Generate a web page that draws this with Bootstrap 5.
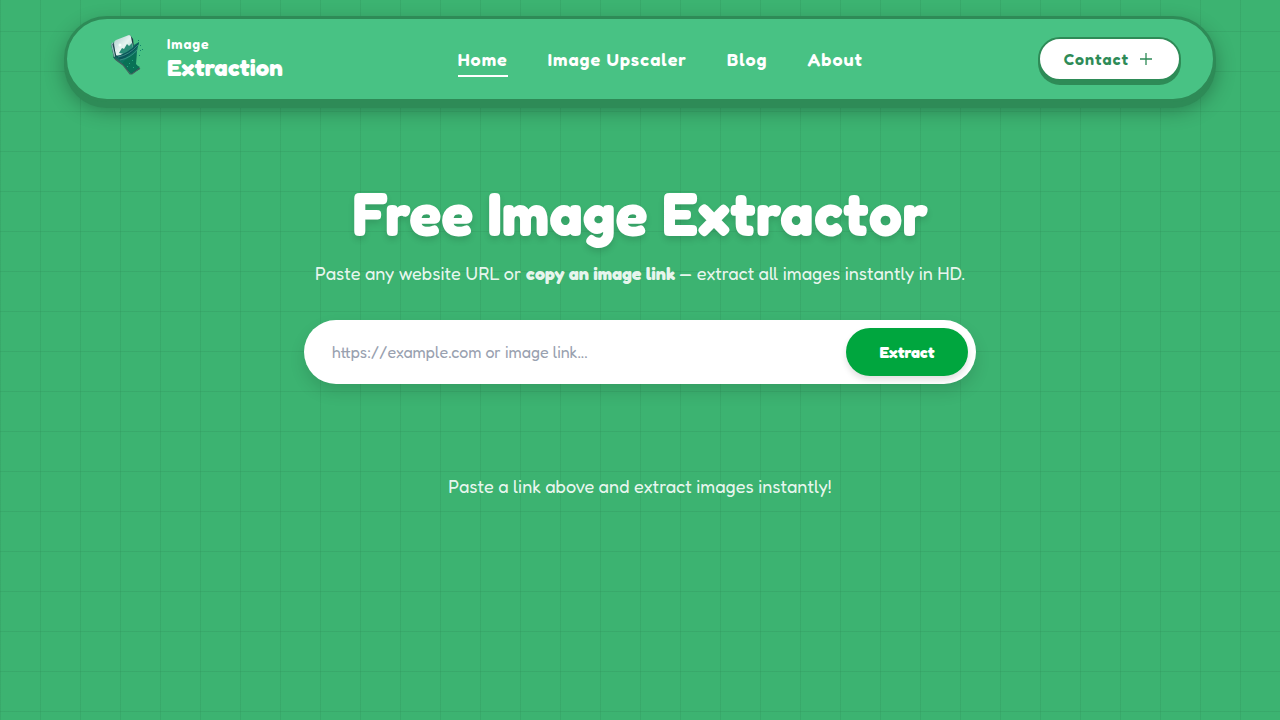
<!DOCTYPE html>
<html lang="en">
<head>
<meta charset="utf-8">
<meta name="viewport" content="width=device-width, initial-scale=1">
<title>Free Image Extractor</title>
<link rel="stylesheet" href="https://cdn.jsdelivr.net/npm/bootstrap@5.3.0/dist/css/bootstrap.min.css">
<style>
  :root { --edge: #2e8b57; --panel: #48c284; --page: #3cb371; }
  body {
    font-family: Fredoka, Lato, sans-serif;
    min-height: 100vh;
    background-color: var(--page);
    background-image:
      linear-gradient(rgba(46, 139, 87, .25) 1px, transparent 1px),
      linear-gradient(90deg, rgba(46, 139, 87, .25) 1px, transparent 1px);
    background-size: 40px 40px;
    background-position: 0 31px, 0 0;
  }
  .site-bar {
    width: 90%;
    min-height: 86px;
    padding: 0 32px 0 40px;
    background: var(--panel);
    border: 3px solid var(--edge);
    border-radius: 44px;
    box-shadow: 0 6px 0 var(--edge), 0 8px 20px rgba(0, 0, 0, .3);
  }
  .brand-link { padding-bottom: 2px; }
  .brand-link svg { margin-bottom: 6px; }
  .brand-top { font-size: 14px; line-height: 20px; font-weight: 600; letter-spacing: 1px; }
  .brand-main { font-size: 24px; line-height: 28px; font-weight: 700; }
  .site-links { gap: 40px; padding-top: 4px; }
  .site-links a { font-size: 18px; line-height: 28px; font-weight: 600; letter-spacing: 1px; padding-bottom: 2px; border-bottom: 2px solid transparent; }
  .site-links a.active { border-color: #fff; }
  .contact-btn {
    color: var(--edge); background: #fff;
    font-size: 16px; line-height: 24px; font-weight: 600; letter-spacing: 1px;
    padding: 8px 24px;
    border: 2px solid var(--edge);
    box-shadow: 0 4px 0 var(--edge);
  }
  .hero { max-width: 672px; margin-top: 75px; }
  .hero h1 { font-size: 60px; line-height: 72px; margin-bottom: 10px; font-weight: 700; text-shadow: 0 4px 6px rgba(0, 0, 0, .12); }
  .soft { font-size: 18px; line-height: 28px; color: rgba(255, 255, 255, .9); }
  .soft strong { font-weight: 700; }
  .url-form { padding: 8px; margin-top: 33px; box-shadow: 0 8px 16px rgba(0, 0, 0, .12); }
  .url-form input { font-size: 16px; line-height: 24px; padding: 12px 20px; outline-offset: -4px; }
  .url-form input::placeholder { color: #99a1af; }
  .extract-btn {
    background: #00a63e; font-size: 16px; line-height: 24px; font-weight: 700;
    min-width: 122px; padding: 12px 32px; box-shadow: 0 4px 6px rgba(0, 0, 0, .12);
  }
  .hint { margin-top: 88px; }
</style>
</head>
<body>
<header class="site-bar d-flex align-items-center justify-content-between mx-auto mt-3">
  <a href="#" class="brand-link d-flex align-items-center text-white text-decoration-none">
    <svg width="40" height="48" viewBox="0 0 40 48" aria-hidden="true">
      <defs>
        <linearGradient id="sheet" x1="0" y1="0" x2="1" y2="1"><stop offset="0" stop-color="#a9cbcb"/><stop offset=".5" stop-color="#e6f4f1"/><stop offset="1" stop-color="#8cc4b8"/></linearGradient>
        <linearGradient id="fold" x1="0" y1="0" x2="1" y2="1"><stop offset="0" stop-color="#234a50"/><stop offset=".5" stop-color="#0c7963"/><stop offset="1" stop-color="#083f43"/></linearGradient>
      </defs>
      <path d="M4 13 23 4 26 8 27 17 14 28 7 27Z" fill="#1b3b42"/>
      <path d="M6 26Q8 29 16 34L24 43 33 38 29 33 30 20 32 11Z" fill="url(#fold)"/>
      <path d="M7 12Q7 10 9 9L22 4Q24 4 24 6L26 16 11 26 8 23Z" fill="url(#sheet)"/>
      <path d="M4 13 6 11 9 25 7 26Z" fill="#8db8b9"/>
      <path d="M6 13 9 26" stroke="#123c42" fill="none"/>
      <path d="M12 22 15 17 17 18 20 13 22 15 25 12 26 17 17 23Z" fill="#2a8c77"/>
      <circle cx="13" cy="14" r="1.5" fill="#f3fffb"/>
      <path d="M8 25Q20 24 32 11Q31 20 14 29Z" fill="#0b555a"/>
      <path d="M11 26Q22 24 31 14M13 29Q24 27 31 18" fill="none" stroke="#43958a" stroke-width=".8"/>
      <path d="M17 30 29 22 29 34 33 36 24 43 15 33Z" fill="#087155"/>
      <path d="M8 28 16 34 23 43 25 43 33 37" fill="none" stroke="#43605f" stroke-width="1.2"/>
      <g fill="#108569"><path d="M33 14h1v1h-1zM33 19h1v1h-1zM32 24h1v1h-1zM31 9h1v1h-1zM35 18h1v1h-1z"/></g>
      <g fill="#25a47d"><path d="M22 32h1v1h-1zM25 29h1v1h-1zM26 36h1v1h-1zM20 35h1v1h-1z"/></g>
    </svg>
    <span class="d-flex flex-column ms-3 ps-1">
      <span class="brand-top">Image</span>
      <span class="brand-main">Extraction</span>
    </span>
  </a>
  <nav class="site-links d-flex" aria-label="Main">
    <a href="#" class="active text-white text-decoration-none" aria-current="page">Home</a>
    <a href="#" class="text-white text-decoration-none">Image Upscaler</a>
    <a href="#" class="text-white text-decoration-none">Blog</a>
    <a href="#" class="text-white text-decoration-none">About</a>
  </nav>
  <button type="button" class="contact-btn rounded-pill d-flex align-items-center gap-2">
    Contact
    <svg width="18" height="18" viewBox="0 0 18 18" fill="none" stroke="currentColor" stroke-width="1.3" aria-hidden="true"><path d="M9 3v12M3 9h12"/></svg>
  </button>
</header>
<main class="hero mx-auto text-center text-white">
  <h1 class="text-nowrap">Free Image Extractor</h1>
  <p class="soft mb-0">Paste any website URL or <strong>copy an image link</strong> — extract all images instantly in HD.</p>
  <form class="url-form d-flex bg-white rounded-pill">
    <input id="url" type="text" aria-label="Website or image link" class="flex-grow-1 border-0 bg-transparent rounded-pill" placeholder="https://example.com or image link...">
    <button type="button" class="extract-btn border-0 rounded-pill text-white">Extract</button>
  </form>
  <p class="soft hint mb-0">Paste a link above and extract images instantly!</p>
</main>
<script src="https://cdn.jsdelivr.net/npm/bootstrap@5.3.0/dist/js/bootstrap.bundle.min.js"></script>
</body>
</html>
